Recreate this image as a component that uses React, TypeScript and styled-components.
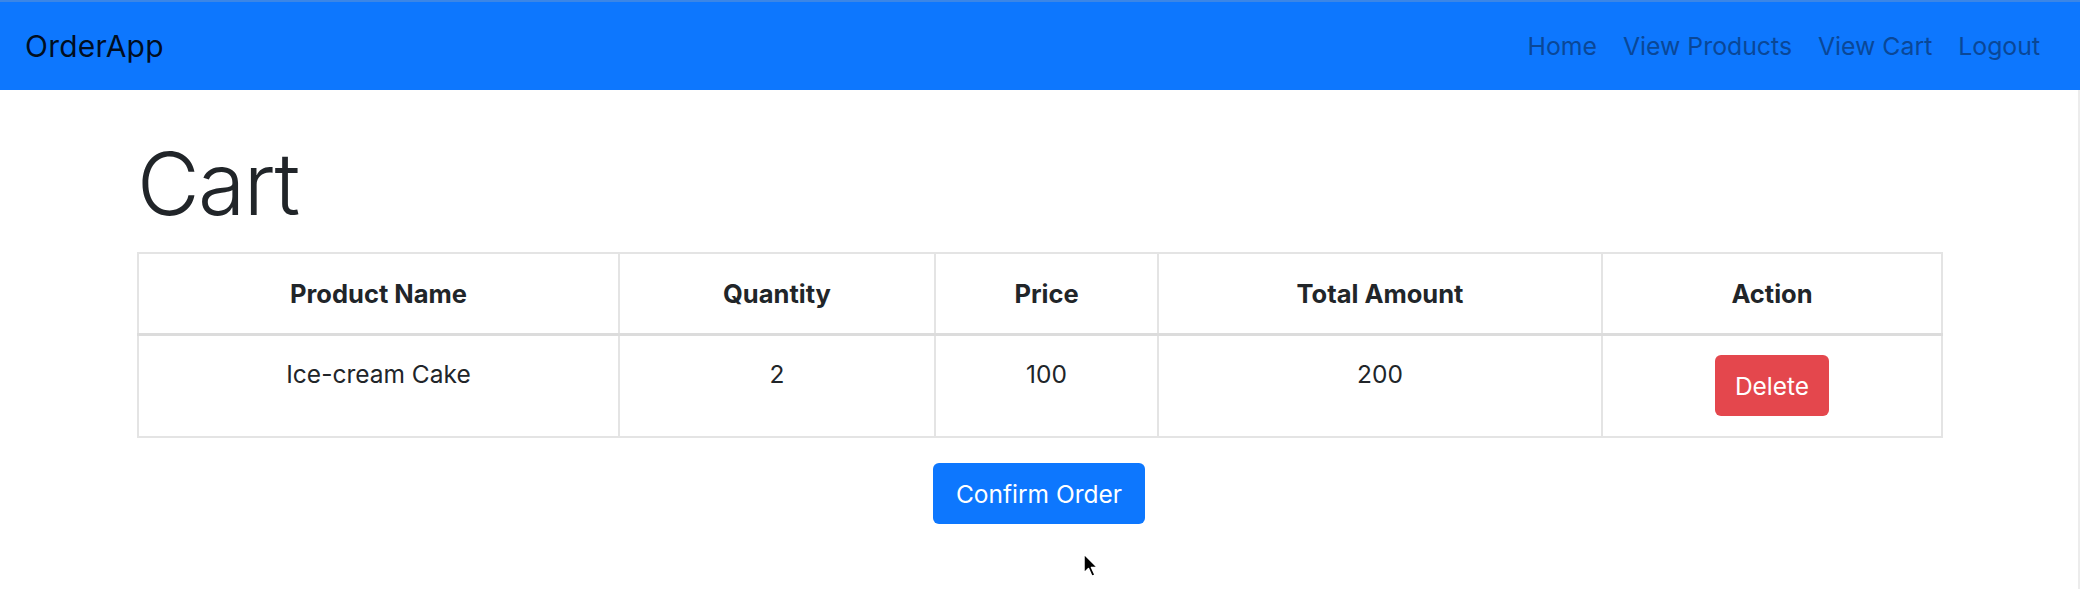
import React from 'react';
import styled, { createGlobalStyle } from 'styled-components';

const c_primary = '#0d77fe';
const c_danger = '#e4474d';
const c_text = '#212529';
const c_border = '#e4e4e4';
const t_font_family = 'Inter, "Liberation Sans", sans-serif';

const GlobalStyle = createGlobalStyle`
  html, body {
    margin: 0;
    padding: 0;
    background: #ffffff;
  }
  body {
    font-family: ${t_font_family};
    color: ${c_text};
  }
`;

const Page = styled.div`
  position: relative;
  width: 2080px;
  height: 589px;
  overflow: hidden;
  box-shadow: inset -2px 0 0 #ececec;
`;

/* Navbar */
const Navbar = styled.nav`
  display: flex;
  align-items: center;
  justify-content: space-between;
  height: 90px;
  box-sizing: border-box;
  padding: 0 40px 0 25px;
  background: ${c_primary};
  border-top: 2px solid #3b86e6;
`;

const Brand = styled.a`
  color: rgba(0, 0, 0, 0.88);
  font-size: 30px;
  letter-spacing: 0.2px;
  text-decoration: none;
`;

const NavLinks = styled.div`
  display: flex;
  align-items: center;
  gap: 26px;
`;

const NavLink = styled.a`
  color: #0a4797;
  font-size: 24.8px;
  text-decoration: none;
`;

/* Content */
const Main = styled.main`
  padding: 0 139px 0 137px;
`;

const Heading = styled.h1`
  margin: 42px 0 0;
  height: 120px;
  font-size: 86px;
  font-weight: 300;
  line-height: 104px;
  letter-spacing: -1.5px;
`;

const Table = styled.table`
  width: 100%;
  border-collapse: collapse;
  table-layout: fixed;
  font-size: 24.5px;
`;

const HeadCell = styled.th`
  padding: 20px;
  height: 39px;
  line-height: 39px;
  font-size: 25.5px;
  font-weight: 700;
  text-align: center;
  vertical-align: top;
  border: 2px solid ${c_border};
  border-bottom: 3px solid #dcdcdc;
`;

const Cell = styled.td`
  padding: 19px 20px 20px;
  height: 61px;
  line-height: 39px;
  text-align: center;
  vertical-align: top;
  border: 2px solid ${c_border};
`;

const Button = styled.button<{ variant: 'primary' | 'danger' }>`
  height: 61px;
  padding: 0 ${(props) => (props.variant === 'danger' ? 20 : 23)}px;
  border: none;
  border-radius: 6px;
  background: ${(props) => (props.variant === 'danger' ? c_danger : c_primary)};
  color: #ffffff;
  font-family: ${t_font_family};
  font-size: 24.5px;
  cursor: pointer;
`;

const Actions = styled.div`
  display: flex;
  justify-content: center;
  margin-top: 25px;
`;

const Cursor = styled.svg`
  position: absolute;
  left: 1083px;
  top: 553px;
`;

const columns = [
  { label: 'Product Name', width: 481 },
  { label: 'Quantity', width: 316 },
  { label: 'Price', width: 223 },
  { label: 'Total Amount', width: 444 },
  { label: 'Action', width: 340 },
];

const cart = [{ id: 1, name: 'Ice-cream Cake', quantity: 2, price: 100 }];

export default function App() {
  return (
    <Page>
      <GlobalStyle />
      <Navbar>
        <Brand href="#">OrderApp</Brand>
        <NavLinks>
          <NavLink href="#">Home</NavLink>
          <NavLink href="#">View Products</NavLink>
          <NavLink href="#">View Cart</NavLink>
          <NavLink href="#">Logout</NavLink>
        </NavLinks>
      </Navbar>
      <Main>
        <Heading>Cart</Heading>
        <Table>
          <colgroup>
            {columns.map((col) => (
              <col key={col.label} style={{ width: col.width }} />
            ))}
          </colgroup>
          <thead>
            <tr>
              {columns.map((col) => (
                <HeadCell key={col.label}>{col.label}</HeadCell>
              ))}
            </tr>
          </thead>
          <tbody>
            {cart.map((item) => (
              <tr key={item.id}>
                <Cell>{item.name}</Cell>
                <Cell>{item.quantity}</Cell>
                <Cell>{item.price}</Cell>
                <Cell>{item.quantity * item.price}</Cell>
                <Cell>
                  <Button variant="danger">Delete</Button>
                </Cell>
              </tr>
            ))}
          </tbody>
        </Table>
        <Actions>
          <Button variant="primary">Confirm Order</Button>
        </Actions>
      </Main>
      <Cursor width="18" height="26" viewBox="0 0 18 26">
        <path d="M1 1 L1 20 L5.5 15.5 L9 23.5 L12 22 L8.5 14.5 L14.5 14.5 Z" fill="#000" stroke="#fff" strokeWidth="1.5" strokeLinejoin="round" />
      </Cursor>
    </Page>
  );
}
